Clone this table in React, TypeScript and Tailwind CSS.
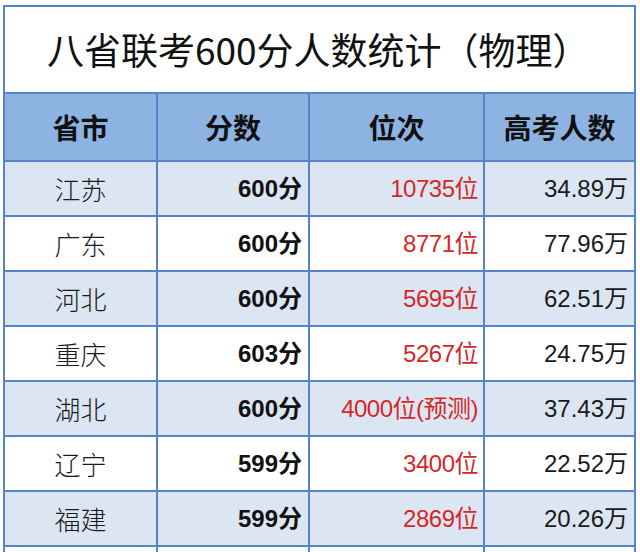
const rows = [
  { city: '江苏', score: '600分', rank: '10735位', total: '34.89万' },
  { city: '广东', score: '600分', rank: '8771位', total: '77.96万' },
  { city: '河北', score: '600分', rank: '5695位', total: '62.51万' },
  { city: '重庆', score: '603分', rank: '5267位', total: '24.75万' },
  { city: '湖北', score: '600分', rank: '4000位(预测)', total: '37.43万' },
  { city: '辽宁', score: '599分', rank: '3400位', total: '22.52万' },
  { city: '福建', score: '599分', rank: '2869位', total: '20.26万' },
];

export default function App() {
  return (
    <div
      className="h-[552px] w-[640px] overflow-hidden bg-white pl-[3px] pt-[5px]"
      style={{ fontFamily: '"Liberation Sans", "Noto Sans CJK SC", sans-serif' }}
    >
      <div className="w-[633px] border-2 border-[#5585c6]">
        {/* 标题 */}
        <div className="flex h-[85px] items-center pl-[42px] text-[37px] text-[#111]">
          <span style={{ fontFamily: '"Noto Sans CJK SC", sans-serif' }}>八省联考600分人数统计（物理）</span>
        </div>

        <table className="w-full table-fixed border-collapse">
          <colgroup>
            <col className="w-[152px]" />
            <col className="w-[152px]" />
            <col className="w-[175px]" />
            <col />
          </colgroup>
          <thead>
            <tr className="h-[68px] bg-[#8db3e2] text-[28px] font-bold text-[#111]">
              {['省市', '分数', '位次', '高考人数'].map((h, i) => (
                <th
                  key={h}
                  className={`border-2 border-[#5585c6] font-bold ${i === 0 ? 'border-l-0' : ''} ${
                    i === 3 ? 'border-r-0' : ''
                  }`}
                  style={{ fontFamily: '"Noto Sans CJK SC", sans-serif' }}
                >
                  {h}
                </th>
              ))}
            </tr>
          </thead>
          <tbody>
            {rows.map((r, idx) => (
              <tr key={r.city} className={`h-[55px] ${idx % 2 === 0 ? 'bg-[#dce6f2]' : 'bg-white'}`}>
                <td
                  className="border-2 border-l-0 border-[#5585c6] text-center text-[26px] text-[#1a1a1a]"
                  style={{ fontFamily: '"Noto Sans CJK SC", sans-serif', fontWeight: 300 }}
                >
                  {r.city}
                </td>
                <td className="border-2 border-[#5585c6] pr-[6px] text-right text-[24px] font-bold text-[#111]">
                  {r.score}
                </td>
                <td className="border-2 border-[#5585c6] pr-[5px] text-right text-[24px] tracking-[-0.5px] text-[#d42828]">
                  {r.rank}
                </td>
                <td className="border-2 border-r-0 border-[#5585c6] pr-[6px] text-right text-[24px] text-[#1a1a1a]">
                  {r.total}
                </td>
              </tr>
            ))}
            {/* 下一行（被截断） */}
            <tr className="h-[55px] bg-white">
              <td className="border-2 border-l-0 border-[#5585c6]" />
              <td className="border-2 border-[#5585c6]" />
              <td className="border-2 border-[#5585c6]" />
              <td className="border-2 border-r-0 border-[#5585c6]" />
            </tr>
          </tbody>
        </table>
      </div>
    </div>
  );
}
